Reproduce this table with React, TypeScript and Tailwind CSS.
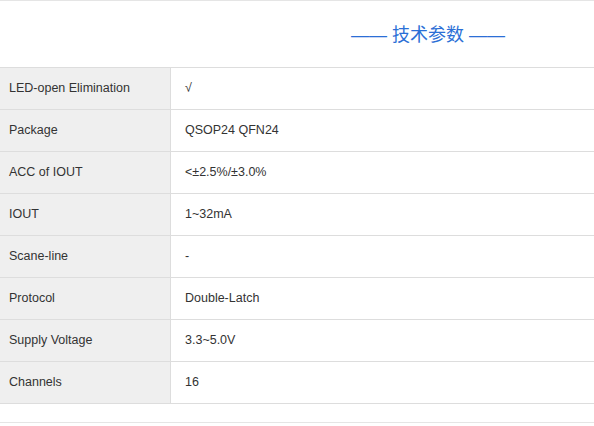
const specs: [string, string][] = [
  ['LED-open Elimination', '√'],
  ['Package', 'QSOP24 QFN24'],
  ['ACC of IOUT', '<±2.5%/±3.0%'],
  ['IOUT', '1~32mA'],
  ['Scane-line', '-'],
  ['Protocol', 'Double-Latch'],
  ['Supply Voltage', '3.3~5.0V'],
  ['Channels', '16'],
];

export default function App() {
  return (
    <div className="w-[594px] h-[426px] bg-white overflow-hidden font-['Liberation_Sans',Arial,sans-serif] text-[#333]">
      {/* section title */}
      <div className="border-t border-[#e5e5e5] h-[67px] flex items-center justify-center pl-[262px]">
        <h2 className="text-[18px] leading-none text-[#2b6fd6] font-normal whitespace-nowrap -mt-[1px]">
          <span className="font-['Liberation_Sans',sans-serif]">——</span>{' '}
          <span className="font-['Noto_Sans_CJK_SC',sans-serif]">技术参数</span>{' '}
          <span className="font-['Liberation_Sans',sans-serif]">——</span>
        </h2>
      </div>

      <div className="border-t border-[#dddddd]">
        {specs.map(([label, value]) => (
          <div key={label} className="flex h-[42px] border-b border-[#dddddd] text-[12.5px]">
            <div className="w-[171px] shrink-0 bg-[#efefef] border-r border-[#dddddd] flex items-center pl-[9px]">
              {label}
            </div>
            <div className="flex-1 flex items-center pl-[14px]">{value}</div>
          </div>
        ))}
      </div>

      <div className="mt-[18px] border-t border-[#e5e5e5]" />
    </div>
  );
}
